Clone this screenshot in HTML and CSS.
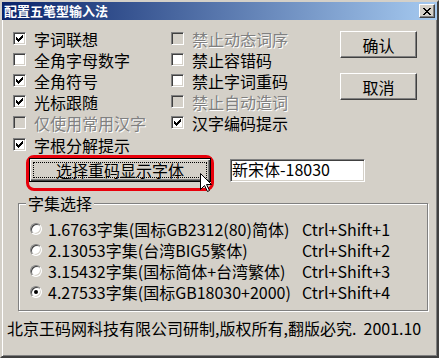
FILE: index.html
```html
<!DOCTYPE html>
<html>
<head>
    <title>配置五笔型输入法</title>
    <link rel="stylesheet" href="styles.css">
</head>
<body>
    <div class="window">
        <div class="titlebar">
            <span class="title">配置五笔型输入法</span>
            <span class="close">
                <svg width="8" height="7" viewBox="0 0 8 7" shape-rendering="crispEdges"><path d="M0 0h2v1h-2zM6 0h2v1h-2zM1 1h2v1h-2zM5 1h2v1h-2zM2 2h4v1h-4zM3 3h2v1h-2zM2 4h4v1h-4zM1 5h2v1h-2zM5 5h2v1h-2zM0 6h2v1h-2zM6 6h2v1h-2z" fill="#000"/></svg>
            </span>
        </div>

        <div class="client">
            <div class="top">
                <!-- option checkboxes, two columns -->
                <div class="options">
                    <label class="opt"><span class="check on"></span>字词联想</label>
                    <label class="opt disabled"><span class="check"></span>禁止动态词序</label>
                    <label class="opt"><span class="check"></span>全角字母数字</label>
                    <label class="opt"><span class="check"></span>禁止容错码</label>
                    <label class="opt"><span class="check on"></span>全角符号</label>
                    <label class="opt"><span class="check"></span>禁止字词重码</label>
                    <label class="opt"><span class="check on"></span>光标跟随</label>
                    <label class="opt disabled"><span class="check"></span>禁止自动造词</label>
                    <label class="opt disabled"><span class="check"></span>仅使用常用汉字</label>
                    <label class="opt"><span class="check on"></span>汉字编码提示</label>
                    <label class="opt last"><span class="check on"></span>字根分解提示</label>
                </div>
                <div class="buttons">
                    <button class="btn">确认</button>
                    <button class="btn">取消</button>
                </div>
            </div>

            <div class="fontrow">
                <div class="hilite">
                    <button class="btn focus">选择重码显示字体</button>
                    <svg class="cursor" width="13" height="20" viewBox="0 0 13 20"><path d="M0.5 0.5V16.5L4.5 12.5L7.5 18.5L9.5 17.5L6.5 11.5H11.5Z" fill="#fff" stroke="#000" stroke-width="1"/></svg>
                </div>
                <div class="textbox">新宋体-18030</div>
            </div>

            <fieldset class="charset">
                <legend>字集选择</legend>
                <div class="radios">
                    <label class="radio"><span class="dot"></span>1.6763字集(国标GB2312(80)简体)</label>
                    <span class="key">Ctrl+Shift+1</span>
                    <label class="radio"><span class="dot"></span>2.13053字集(台湾BIG5繁体)</label>
                    <span class="key">Ctrl+Shift+2</span>
                    <label class="radio"><span class="dot"></span>3.15432字集(国标简体+台湾繁体)</label>
                    <span class="key">Ctrl+Shift+3</span>
                    <label class="radio"><span class="dot on"></span>4.27533字集(国标GB18030+2000)</label>
                    <span class="key">Ctrl+Shift+4</span>
                </div>
            </fieldset>

            <div class="footer">北京王码网科技有限公司研制,版权所有,翻版必究.  2001.10</div>
        </div>
    </div>
</body>
</html>
```

FILE: styles.css
```css
body {
    margin: 0;
    font-family: "Noto Sans CJK SC", "DejaVu Sans", sans-serif;
    font-size: 16px;
    color: #000;
}
.window {
    width: 439px;
    height: 358px;
    box-sizing: border-box;
    background-color: #d4d0c8;
    border: 2px solid;
    border-color: #d4d0c8 #404040 #404040 #d4d0c8;
    box-shadow: inset 1px 1px #fff, inset -1px -1px #808080;
}
.titlebar {
    height: 18px;
    display: flex;
    align-items: center;
    justify-content: space-between;
    padding: 0 2px 0 2px;
    background: linear-gradient(to right, #0a246a, #a6caf0);
}
.title {
    color: #fff;
    font-size: 13px;
    font-weight: bold;
    line-height: 14px;
}
.close {
    width: 16px;
    height: 14px;
    box-sizing: border-box;
    display: flex;
    align-items: center;
    justify-content: center;
    background-color: #d4d0c8;
    border: 1px solid;
    border-color: #fff #404040 #404040 #fff;
    box-shadow: inset -1px -1px #808080;
}
.client {
    padding: 8px 0 0 5px;
}
.top {
    display: flex;
}
.options {
    margin-left: 6px;
    display: grid;
    grid-template-columns: 158px 169px;
    grid-auto-rows: 21px;
}
.opt {
    display: flex;
    align-items: center;
    gap: 8px;
    line-height: 16px;
    white-space: nowrap;
}
.opt.last {
    margin-top: 2px;
}
.opt.disabled {
    color: #808080;
    text-shadow: 1px 1px 0 #fff;
}
.check {
    width: 13px;
    height: 13px;
    box-sizing: border-box;
    flex: none;
    background: #fff;
    border: 1px solid;
    border-color: #808080 #fff #fff #808080;
    box-shadow: inset 1px 1px #404040, inset -1px -1px #d4d0c8;
}
.disabled .check {
    background-color: #d4d0c8;
}
.check.on {
    background-image: url("data:image/svg+xml,%3Csvg xmlns='http://www.w3.org/2000/svg' width='11' height='11' viewBox='1 1 11 11' shape-rendering='crispEdges'%3E%3Cpath d='M3 5h1v3h-1zM4 6h1v3h-1zM5 7h1v3h-1zM6 6h1v3h-1zM7 5h1v3h-1zM8 4h1v3h-1zM9 3h1v3h-1z'/%3E%3C/svg%3E");
    background-repeat: no-repeat;
}
.buttons {
    margin-top: 3px;
    display: flex;
    flex-direction: column;
    gap: 15px;
}
.btn {
    width: 77px;
    height: 27px;
    padding: 0;
    font-family: inherit;
    font-size: 16px;
    line-height: 16px;
    color: #000;
    background-color: #d4d0c8;
    border: 1px solid;
    border-color: #fff #404040 #404040 #fff;
    box-shadow: inset -1px -1px #808080, inset 1px 1px #d4d0c8;
}
.fontrow {
    display: flex;
    align-items: flex-start;
    margin-top: 1px;
    padding-left: 19px;
}
.hilite {
    position: relative;
    border: 3px solid #e8000b;
    border-radius: 8px;
    padding: 0 0 6px 0;
}
.btn.focus {
    display: block;
    width: 182px;
    height: 24px;
    border-color: #000;
    box-shadow: inset 1px 1px #fff, inset -1px -1px #404040, inset -2px -2px #808080;
    outline: 1px dotted #000;
    outline-offset: -5px;
}
.cursor {
    position: absolute;
    left: 171px;
    top: 15px;
}
.textbox {
    margin: 4px 0 0 16px;
    width: 135px;
    height: 23px;
    box-sizing: border-box;
    padding-left: 1px;
    line-height: 19px;
    background-color: #fff;
    border: 1px solid;
    border-color: #808080 #fff #fff #808080;
    box-shadow: inset 1px 1px #404040, inset -1px -1px #d4d0c8;
}
.charset {
    margin: 4px 0 0 11px;
    width: 410px;
    height: 116px;
    box-sizing: border-box;
    min-width: 0;
    padding: 7px 0 0 0;
    border: 1px solid #808080;
    box-shadow: inset 1px 1px #fff, 1px 1px #fff;
}
.charset legend {
    margin-left: 7px;
    padding: 0 2px;
    line-height: 16px;
    background-color: #d4d0c8;
}
.radios {
    display: grid;
    grid-template-columns: 272px auto;
    grid-auto-rows: 21px;
    align-items: center;
    padding-left: 11px;
    line-height: 16px;
}
.radio {
    display: flex;
    align-items: center;
    gap: 6px;
    white-space: nowrap;
}
.dot {
    width: 12px;
    height: 12px;
    box-sizing: border-box;
    flex: none;
    position: relative;
    border-radius: 50%;
    background-color: #fff;
    border: 1px solid;
    border-color: #808080 #fff #fff #808080;
    box-shadow: inset 1px 1px #404040, inset -1px -1px #d4d0c8;
}
.dot.on::after {
    content: "";
    position: absolute;
    left: 3px;
    top: 3px;
    width: 4px;
    height: 4px;
    border-radius: 50%;
    background-color: #000;
}
.key {
    white-space: nowrap;
}
.footer {
    margin-top: 9px;
    line-height: 16px;
    white-space: pre;
}
```
